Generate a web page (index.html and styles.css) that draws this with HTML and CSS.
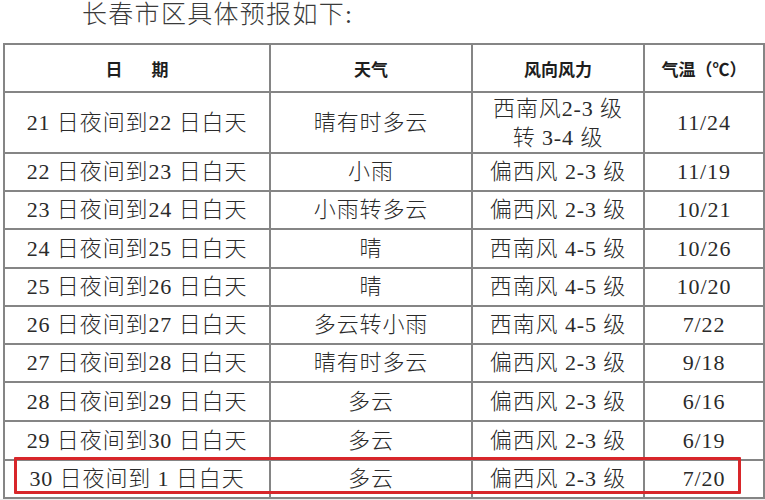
FILE: index.html
```html
<!DOCTYPE html>
<html lang="zh-CN">
<head>
<meta charset="utf-8">
<link rel="stylesheet" href="styles.css">
</head>
<body>
<div class="page">
  <h1 class="title">长春市区具体预报如下:</h1>
  <div class="table-wrap">
    <table class="forecast">
      <colgroup>
        <col class="c1"><col class="c2"><col class="c3"><col class="c4">
      </colgroup>
      <thead>
        <tr class="head">
          <th><span class="spaced">日</span>期</th>
          <th>天气</th>
          <th>风向风力</th>
          <th>气温（℃）</th>
        </tr>
      </thead>
      <tbody>
        <tr class="tall">
          <td>21 日夜间到22 日白天</td>
          <td>晴有时多云</td>
          <td class="two">西南风2-3 级<br>转 3-4 级</td>
          <td>11/24</td>
        </tr>
        <tr><td>22 日夜间到23 日白天</td><td>小雨</td><td>偏西风 2-3 级</td><td>11/19</td></tr>
        <tr><td>23 日夜间到24 日白天</td><td>小雨转多云</td><td>偏西风 2-3 级</td><td>10/21</td></tr>
        <tr class="r39"><td>24 日夜间到25 日白天</td><td>晴</td><td>西南风 4-5 级</td><td>10/26</td></tr>
        <tr><td>25 日夜间到26 日白天</td><td>晴</td><td>西南风 4-5 级</td><td>10/20</td></tr>
        <tr><td>26 日夜间到27 日白天</td><td>多云转小雨</td><td>西南风 4-5 级</td><td>7/22</td></tr>
        <tr><td>27 日夜间到28 日白天</td><td>晴有时多云</td><td>偏西风 2-3 级</td><td>9/18</td></tr>
        <tr class="r39"><td>28 日夜间到29 日白天</td><td>多云</td><td>偏西风 2-3 级</td><td>6/16</td></tr>
        <tr class="r39"><td>29 日夜间到30 日白天</td><td>多云</td><td>偏西风 2-3 级</td><td>6/19</td></tr>
        <tr class="last"><td>30 日夜间到 1 日白天</td><td>多云</td><td>偏西风 2-3 级</td><td>7/20</td></tr>
      </tbody>
    </table>
    <div class="highlight"></div>
  </div>
  <div class="strip"></div>
</div>
</body>
</html>
```

FILE: styles.css
```css
html, body {
  margin: 0;
  padding: 0;
  background: #ffffff;
}
.page {
  width: 765px;
  height: 500px;
  overflow: hidden;
  font-family: "Liberation Serif", "Noto Sans CJK SC", serif;
  color: #2a2a2a;
}
.title {
  margin: 0;
  height: 43px;
  padding-left: 82px;
  box-sizing: border-box;
  padding-top: 0;
  font-size: 25px;
  line-height: 30px;
  font-weight: 300;
  letter-spacing: 1.3px;
  color: #3a3a3a;
}
.table-wrap {
  position: relative;
  margin-left: 3px;
  width: 760px;
}
.forecast {
  width: 760px;
  table-layout: fixed;
  border-collapse: collapse;
}
.forecast .c1 { width: 266px; }
.forecast .c2 { width: 202px; }
.forecast .c3 { width: 172px; }
.forecast .c4 { width: 120px; }
.forecast th,
.forecast td {
  border: 2px solid #858585;
  padding: 0;
  text-align: center;
  vertical-align: middle;
}
.forecast th {
  height: 46px;
  font-size: 17px;
  font-weight: 700;
  color: #1e1e1e;
}
.spaced {
  margin-right: 29px;
}
.forecast td {
  height: 36px;
  font-size: 22px;
  font-weight: 300;
  letter-spacing: 0.9px;
  line-height: 26px;
}
.forecast tr.tall td {
  height: 59px;
}
.forecast tr.r39 td {
  height: 37px;
}
.forecast td.two {
  line-height: 29px;
}
.highlight {
  position: absolute;
  left: 11px;
  top: 414px;
  width: 727px;
  height: 37px;
  border: 3px solid #d8262a;
  box-sizing: border-box;
  border-radius: 1px;
  pointer-events: none;
}
.strip {
  height: 10px;
  background: #ececec;
}
```
